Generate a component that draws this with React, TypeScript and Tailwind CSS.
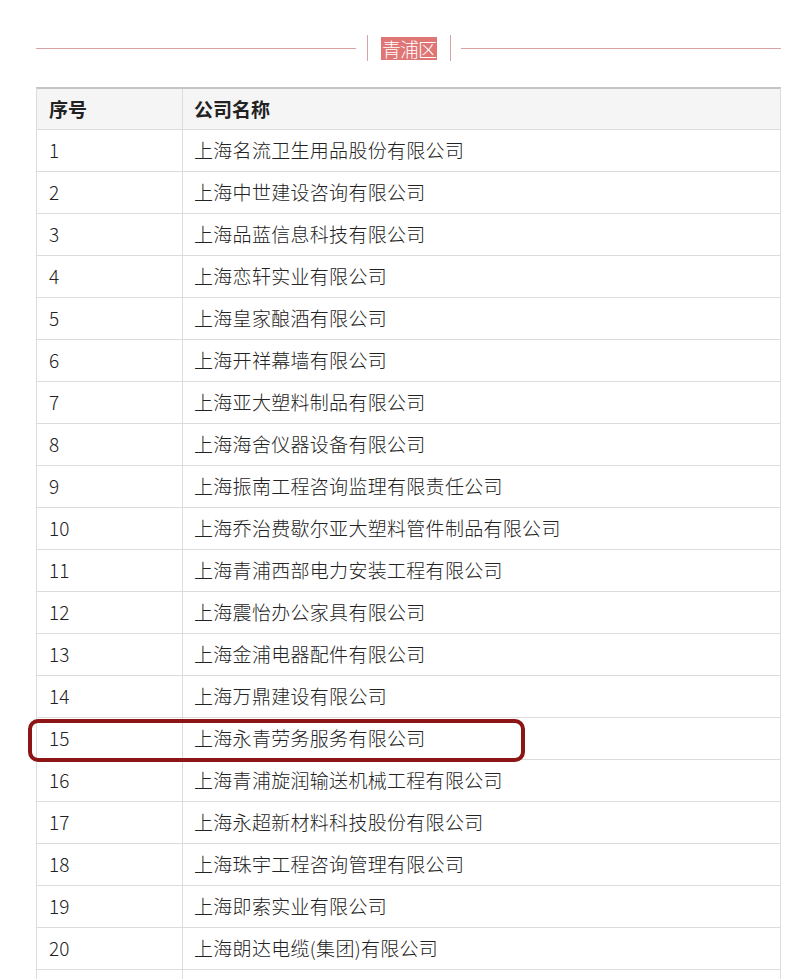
const COMPANIES = [
  "上海名流卫生用品股份有限公司",
  "上海中世建设咨询有限公司",
  "上海品蓝信息科技有限公司",
  "上海恋轩实业有限公司",
  "上海皇家酿酒有限公司",
  "上海开祥幕墙有限公司",
  "上海亚大塑料制品有限公司",
  "上海海舍仪器设备有限公司",
  "上海振南工程咨询监理有限责任公司",
  "上海乔治费歇尔亚大塑料管件制品有限公司",
  "上海青浦西部电力安装工程有限公司",
  "上海震怡办公家具有限公司",
  "上海金浦电器配件有限公司",
  "上海万鼎建设有限公司",
  "上海永青劳务服务有限公司",
  "上海青浦旋润输送机械工程有限公司",
  "上海永超新材料科技股份有限公司",
  "上海珠宇工程咨询管理有限公司",
  "上海即索实业有限公司",
  "上海朗达电缆(集团)有限公司",
  "",
];

const HIGHLIGHT = 15;

export default function App() {
  return (
    <div
      className="w-[809px] h-[979px] overflow-hidden bg-white text-[#333] relative"
      style={{ fontFamily: '"Noto Sans CJK SC", "Microsoft YaHei", sans-serif' }}
    >
      {/* Section title */}
      <div className="flex items-center h-[26px] mt-[35px] pl-[36px] pr-[28px]">
        <div className="flex-1 h-px bg-[#d9a3a3]" />
        <div className="w-px h-[26px] bg-[#d9a3a3] ml-[11px]" />
        <span className="mx-[13px] bg-[#e07575] text-white text-[19px] font-light leading-[23px] px-px tracking-[-1px]">
          青浦区
        </span>
        <div className="w-px h-[26px] bg-[#d9a3a3] mr-[10px]" />
        <div className="flex-1 h-px bg-[#d9a3a3]" />
      </div>

      {/* Table */}
      <div className="mt-[26px] ml-[36px] w-[745px] border-t-2 border-[#c4c4c4] border-r border-r-[#dcdcdc] border-l border-l-[#dcdcdc]">
        <div className="flex h-[41px] bg-[#f5f5f5] border-b border-[#dcdcdc] font-bold text-[19px] text-[#222]">
          <div className="w-[146px] shrink-0 flex items-center pl-[12px] border-r border-[#dcdcdc]">序号</div>
          <div className="flex-1 flex items-center pl-[11px]">公司名称</div>
        </div>
        {COMPANIES.map((name, i) => (
          <div key={i} className="flex h-[42px] border-b border-[#dcdcdc] text-[19px] font-light text-[#222]">
            <div className="w-[146px] shrink-0 flex items-center pl-[12px] border-r border-[#dcdcdc]">
              {name ? i + 1 : ""}
            </div>
            <div className="flex-1 flex items-center pl-[11px] tracking-[0.3px]">{name}</div>
          </div>
        ))}
      </div>

      {/* Highlight box */}
      <div
        className="absolute left-[28px] w-[497px] h-[43px] rounded-[10px] border-[4px] border-[#8e1515]"
        style={{ top: 129 + (HIGHLIGHT - 1) * 42 + 2 }}
      />
    </div>
  );
}
